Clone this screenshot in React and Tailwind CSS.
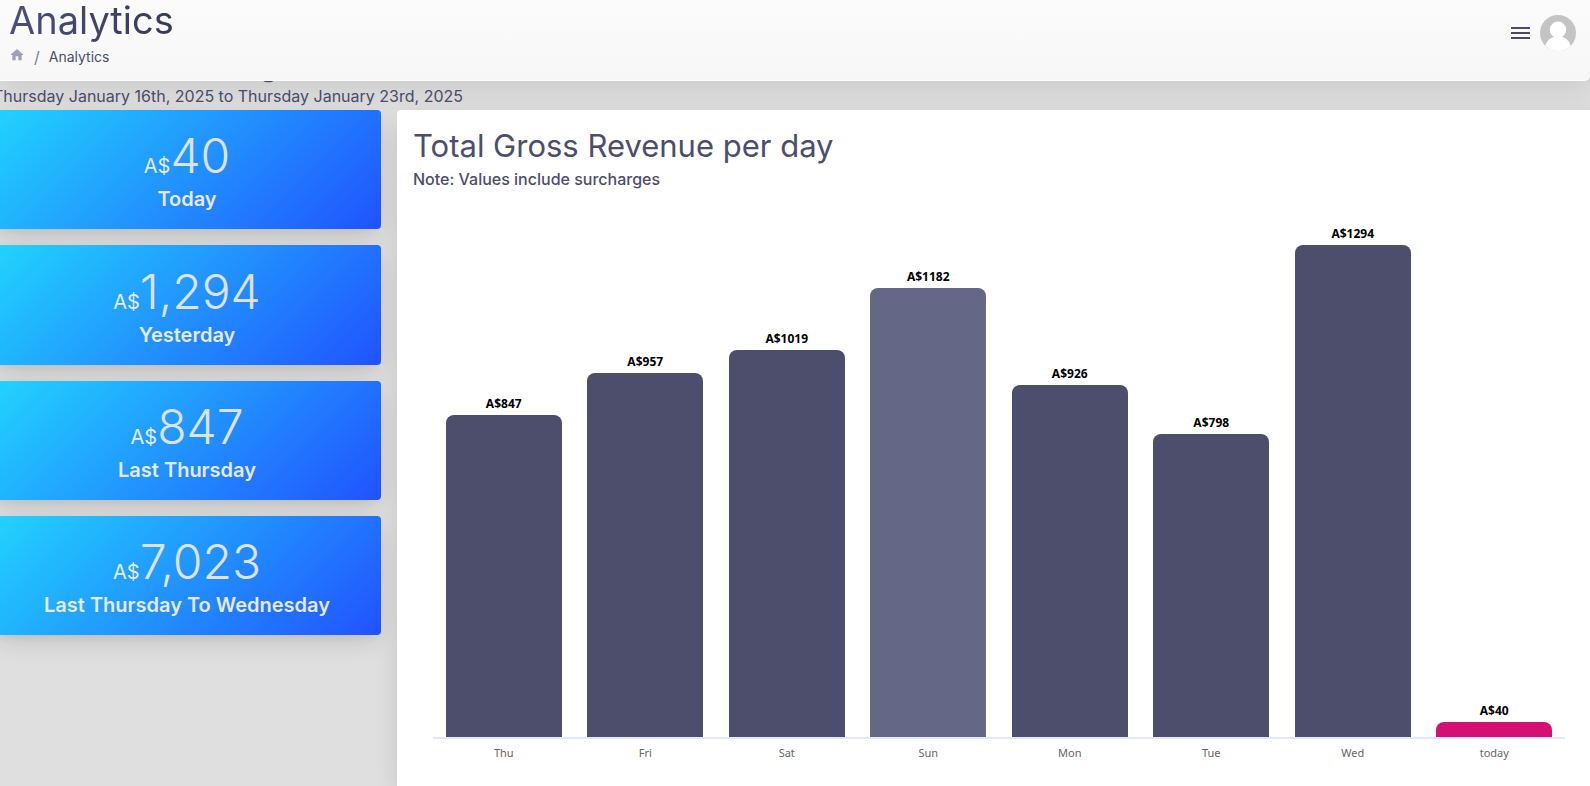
import { MdHome } from "react-icons/md";

const stats = [
  { amount: "40", label: "Today" },
  { amount: "1,294", label: "Yesterday" },
  { amount: "847", label: "Last Thursday" },
  { amount: "7,023", label: "Last Thursday To Wednesday" },
];

const days = [
  { day: "Thu", value: 847, color: "bg-[#4c4e6c]" },
  { day: "Fri", value: 957, color: "bg-[#4c4e6c]" },
  { day: "Sat", value: 1019, color: "bg-[#4c4e6c]" },
  { day: "Sun", value: 1182, color: "bg-[#656786]" },
  { day: "Mon", value: 926, color: "bg-[#4c4e6c]" },
  { day: "Tue", value: 798, color: "bg-[#4c4e6c]" },
  { day: "Wed", value: 1294, color: "bg-[#4c4e6c]" },
  { day: "today", value: 40, color: "bg-[#d60f72]" },
];

const PIXELS_PER_DOLLAR = 0.38;

const softShadow =
  "shadow-[0_8px_26px_-4px_rgba(20,20,20,0.15),0_8px_9px_-5px_rgba(20,20,20,0.06)]";

function Header() {
  return (
    <header className="relative z-10 flex h-[81px] items-start justify-between rounded-br-md border-b border-white bg-linear-to-b from-[#fbfbfb] to-[#f7f7f8] pl-[9px] pr-[14px] shadow-[0_8px_28px_rgba(20,20,20,0.1)]">
      <div>
        <h1 className="bg-linear-to-r from-[#4c4f80] to-[#383a54] bg-clip-text pb-1 text-[38px] leading-[40px] font-normal text-transparent">
          Analytics
        </h1>
        <nav aria-label="Breadcrumb" className="flex h-[26px] items-center text-[14px] leading-[20px] text-[#4c4e6c]">
          <a href="#home" aria-label="Home" className="mb-1 text-[#9fa0b6]">
            <MdHome size={16} />
          </a>
          <span className="px-[9px] text-[16px] text-[#7b7d90]">/</span>
          <span>Analytics</span>
        </nav>
      </div>
      <div className="flex items-center gap-[10px] pt-[15px]">
        <button type="button" aria-label="Menu" className="flex w-[19px] flex-col gap-[3px]">
          <span className="h-[2px] w-full bg-[#4a4870]" />
          <span className="h-[2px] w-full bg-[#4a4870]" />
          <span className="h-[2px] w-full bg-[#4a4870]" />
        </button>
        <button type="button" aria-label="Account">
          <svg viewBox="0 0 36 36" className="block size-9">
            <defs>
              <clipPath id="avatar">
                <circle cx="18" cy="18" r="18" />
              </clipPath>
            </defs>
            <g clipPath="url(#avatar)">
              <rect width="36" height="36" fill="#c4c4c4" />
              <circle cx="18" cy="14.8" r="8.2" fill="#fff" />
              <circle cx="18" cy="34" r="13" fill="#fff" />
            </g>
          </svg>
        </button>
      </div>
    </header>
  );
}

function StatCard({ amount, label }) {
  return (
    <article
      className={`flex flex-col items-center justify-end rounded bg-linear-[135deg] from-[#21d4fd] to-[#2152ff] pb-[13px] text-[#e6e9ef] ${softShadow}`}
    >
      <p className="flex items-baseline leading-[32px]">
        <span className="text-[20px]">A$</span>
        <span className="text-[48px] font-light text-[#dfe1e7]">{amount}</span>
      </p>
      <h3 className="text-[20px] leading-[34px] font-semibold">{label}</h3>
    </article>
  );
}

function RevenueChart() {
  return (
    <div className="pt-[34px] pr-7 pl-5 font-['Noto_Sans',sans-serif]">
      <div className="grid grid-cols-8 items-end border-b-2 border-[#e6e8f5]">
        {days.map(({ day, value, color }) => (
          <div key={day} className="flex flex-col items-center">
            <span className="pb-[3px] text-[12px] leading-[16px] font-bold text-black">A${value}</span>
            <div
              className={`w-[82%] rounded-t-[8px] ${color}`}
              style={{ height: Math.round(value * PIXELS_PER_DOLLAR) }}
            />
          </div>
        ))}
      </div>
      <div className="grid grid-cols-8 pt-[6px] text-center text-[11px] leading-[16px] text-[#666666]">
        {days.map(({ day }) => (
          <span key={day}>{day}</span>
        ))}
      </div>
    </div>
  );
}

export default function App() {
  return (
    <div className="flex h-screen flex-col overflow-hidden bg-[#dfdfdf] font-[Inter,sans-serif] text-[#4c4e6c]">
      <Header />
      <main className="-mt-9 -mr-[19px] -ml-[7px] flex grow flex-col">
        <h2 className="text-[30px] leading-[40px]">Recent Sales Change</h2>
        <p className="text-[16px] leading-[23px]">
          Thursday January 16th, 2025 to Thursday January 23rd, 2025
        </p>
        <div className="flex grow pt-[2px]">
          <section className="w-1/4 pr-4">
            <div className="grid min-h-[525px] grid-rows-4 gap-4">
              {stats.map((stat) => (
                <StatCard key={stat.label} {...stat} />
              ))}
            </div>
          </section>
          <section className={`flex-1 rounded-t bg-white px-4 pt-[15px] ${softShadow}`}>
            <h2 className="text-[31px] leading-[41px]">Total Gross Revenue per day</h2>
            <p className="text-[16px] leading-[26px] font-medium">Note: Values include surcharges</p>
            <RevenueChart />
          </section>
        </div>
      </main>
    </div>
  );
}
